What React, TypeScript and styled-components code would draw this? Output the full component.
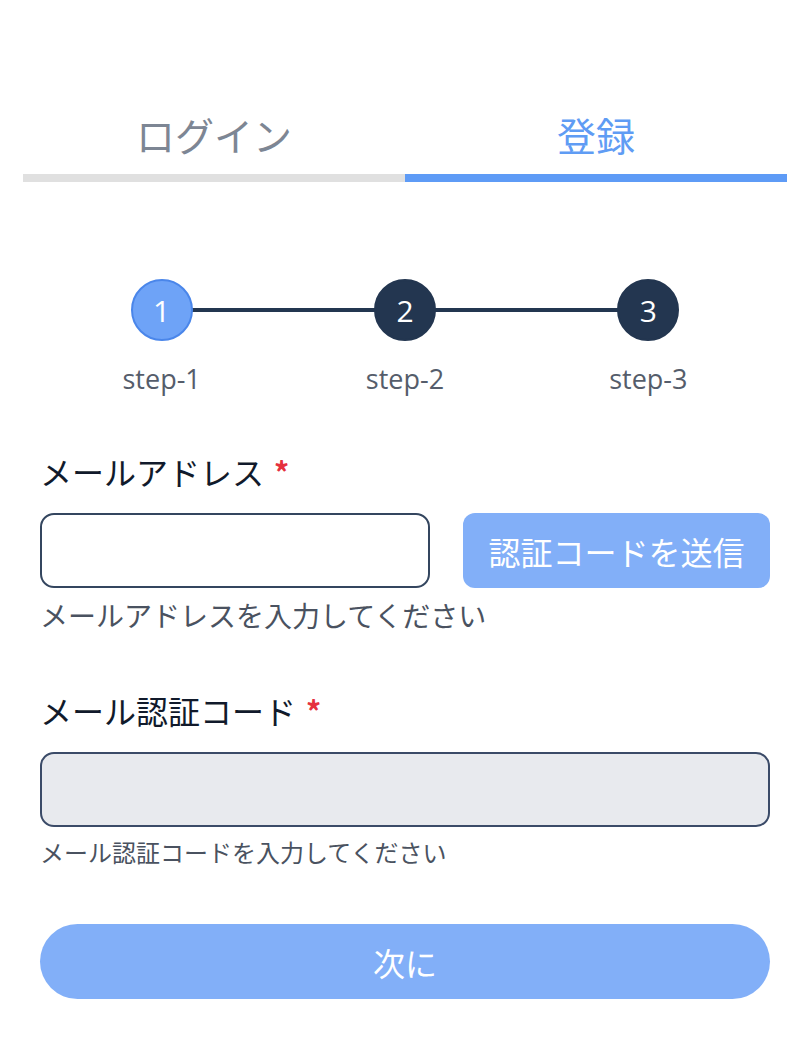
import React, { useState } from "react";
import styled, { createGlobalStyle } from "styled-components";

const GlobalStyle = createGlobalStyle`
  html, body {
    margin: 0;
    padding: 0;
    background: #ffffff;
  }
  body {
    font-family: "Open Sans", "Noto Sans CJK JP", sans-serif;
    color: #1b2232;
  }
  * {
    box-sizing: border-box;
  }
`;

const Page = styled.div`
  width: 806px;
  padding: 106px 19px 40px 23px;
`;

const Tabs = styled.div`
  display: grid;
  grid-template-columns: 1fr 1fr;
`;

const Tab = styled.button<{ $active?: boolean }>`
  border: none;
  background: none;
  padding: 0 0 12px;
  font-family: "Noto Sans CJK JP", sans-serif;
  font-size: 39px;
  line-height: 56px;
  font-weight: 400;
  color: ${(p) => (p.$active ? "#5f9cf4" : "#7d8694")};
  border-bottom: 8px solid ${(p) => (p.$active ? "#5e9bf6" : "#e0e0e0")};
  cursor: pointer;
`;

const Form = styled.div`
  padding: 97px 17px 0;
`;

const Stepper = styled.div`
  display: grid;
  grid-template-columns: repeat(3, 1fr);
`;

const Step = styled.div<{ $last?: boolean }>`
  position: relative;
  display: flex;
  flex-direction: column;
  align-items: center;
  gap: 22px;

  &::after {
    content: "";
    display: ${(p) => (p.$last ? "none" : "block")};
    position: absolute;
    top: 29px;
    left: 50%;
    width: 100%;
    height: 4px;
    background: #233650;
  }
`;

const Circle = styled.div<{ $active?: boolean }>`
  position: relative;
  z-index: 1;
  width: 62px;
  height: 62px;
  border-radius: 50%;
  display: flex;
  align-items: center;
  justify-content: center;
  background: ${(p) => (p.$active ? "#6ea3f7" : "#233650")};
  border: 2px solid ${(p) => (p.$active ? "#4a86ea" : "#233650")};
  color: #ffffff;
  font-size: 30px;
  font-weight: 500;
`;

const StepLabel = styled.div`
  font-size: 27px;
  line-height: 32px;
  color: #555d6b;
`;

const Field = styled.div<{ $top: number }>`
  margin-top: ${(p) => p.$top}px;
`;

const Label = styled.div`
  font-family: "Noto Sans CJK JP", sans-serif;
  font-size: 32px;
  line-height: 40px;
  font-weight: 400;
  color: #111a2b;
  display: flex;
  align-items: center;
`;

const Required = styled.span`
  color: #e5303e;
  margin-left: 10px;
  font-size: 30px;
  font-weight: 700;
`;

const InputRow = styled.div`
  display: flex;
  gap: 33px;
  margin-top: 22px;
`;

const Input = styled.input<{ $disabled?: boolean }>`
  flex: 1;
  min-width: 0;
  height: 75px;
  border: 2px solid ${(p) => (p.$disabled ? "#3b4b68" : "#34465f")};
  border-radius: 14px;
  background: ${(p) => (p.$disabled ? "#e8eaee" : "#ffffff")};
  padding: 0 18px;
  font-size: 26px;
  font-family: inherit;
  outline: none;
`;

const SendButton = styled.button`
  width: 307px;
  height: 75px;
  border: none;
  border-radius: 12px;
  background: #82aff8;
  color: #ffffff;
  font-family: "Noto Sans CJK JP", sans-serif;
  font-size: 32px;
  font-weight: 400;
  cursor: pointer;
`;

const Help = styled.div<{ $size: number }>`
  font-family: "Noto Sans CJK JP", sans-serif;
  font-size: ${(p) => p.$size}px;
  line-height: ${(p) => p.$size + 8}px;
  color: #4a5260;
  margin-top: 9px;
`;

const NextButton = styled.button`
  display: block;
  width: 100%;
  height: 75px;
  margin-top: 56px;
  border: none;
  border-radius: 38px;
  background: #82aff8;
  color: #ffffff;
  font-family: "Noto Sans CJK JP", sans-serif;
  font-size: 32px;
  font-weight: 400;
  cursor: pointer;
`;

const steps = ["step-1", "step-2", "step-3"];

export default function App() {
  const [tab, setTab] = useState<"login" | "register">("register");
  const [email, setEmail] = useState("");
  const [code, setCode] = useState("");

  return (
    <Page>
      <GlobalStyle />
      <Tabs>
        <Tab $active={tab === "login"} onClick={() => setTab("login")}>ログイン</Tab>
        <Tab $active={tab === "register"} onClick={() => setTab("register")}>登録</Tab>
      </Tabs>
      <Form>
        <Stepper>
          {steps.map((s, i) => (
            <Step key={s} $last={i === steps.length - 1}>
              <Circle $active={i === 0}>{i + 1}</Circle>
              <StepLabel>{s}</StepLabel>
            </Step>
          ))}
        </Stepper>

        <Field $top={56}>
          <Label>
            メールアドレス<Required>*</Required>
          </Label>
          <InputRow>
            <Input value={email} onChange={(e) => setEmail(e.target.value)} />
            <SendButton>認証コードを送信</SendButton>
          </InputRow>
          <Help $size={28}>メールアドレスを入力してください</Help>
        </Field>

        <Field $top={57}>
          <Label>
            メール認証コード<Required>*</Required>
          </Label>
          <InputRow>
            <Input $disabled disabled value={code} onChange={(e) => setCode(e.target.value)} />
          </InputRow>
          <Help $size={24}>メール認証コードを入力してください</Help>
        </Field>

        <NextButton>次に</NextButton>
      </Form>
    </Page>
  );
}
